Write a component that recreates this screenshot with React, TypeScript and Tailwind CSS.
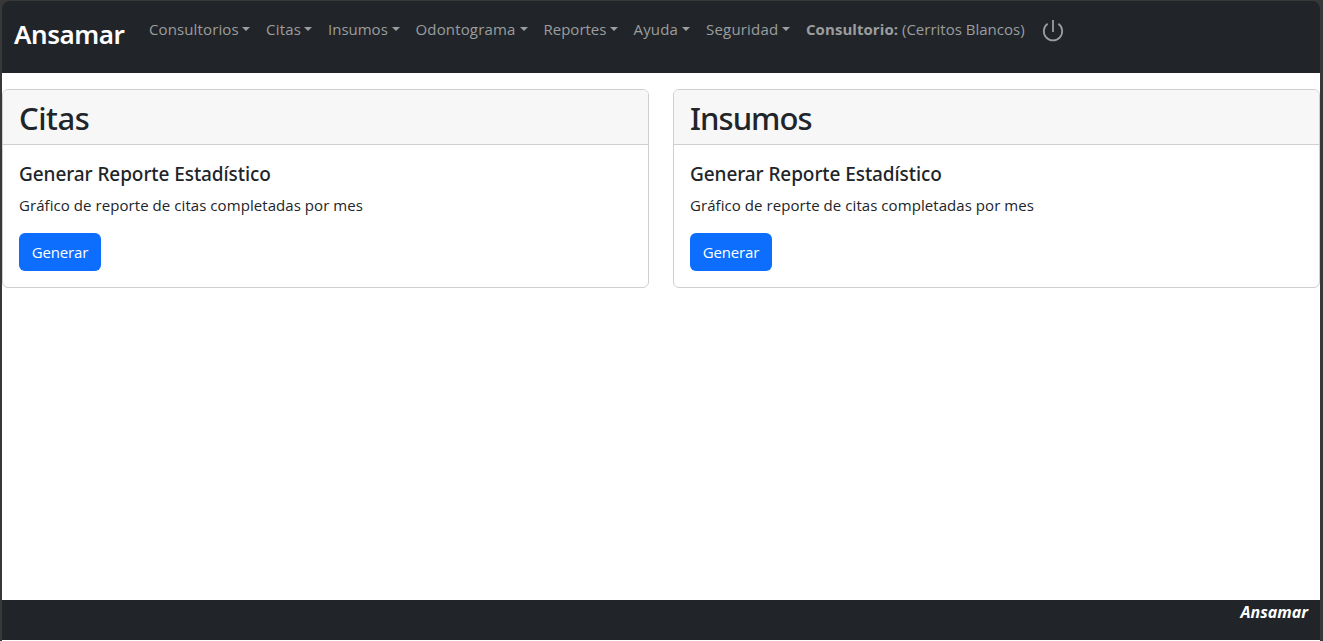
const menus = [
  { label: 'Consultorios', slot: 'w-[117px]', spacing: 'tracking-[0.12px]' },
  { label: 'Citas', slot: 'w-[62px]', spacing: 'tracking-[0.2px]' },
  { label: 'Insumos', slot: 'w-[87.5px]', spacing: 'tracking-[0px]' },
  { label: 'Odontograma', slot: 'w-[128px]', spacing: 'tracking-[0.15px]' },
  { label: 'Reportes', slot: 'w-[90px]', spacing: 'tracking-[0px]' },
  { label: 'Ayuda', slot: 'w-[72.5px]', spacing: 'tracking-[0.15px]' },
  { label: 'Seguridad', slot: 'w-[100px]', spacing: 'tracking-[0.2px]' },
];

const cards = [
  { title: 'Citas', spacing: 'tracking-[-0.5px]' },
  { title: 'Insumos', spacing: 'tracking-[-0.95px]' },
];

function Menu({ label, slot, spacing }: { label: string; slot: string; spacing: string }) {
  return (
    <a className={`flex shrink-0 items-center justify-between pr-4 ${slot}`}>
      <span className={spacing}>{label}</span>
      <span className="h-0 w-0 border-x-[4.8px] border-t-[4.8px] border-x-transparent border-t-[#9b9d9e]" />
    </a>
  );
}

function ReportCard({ title, spacing }: { title: string; spacing: string }) {
  return (
    <section className="h-[199px] overflow-hidden rounded-md border border-[#cfcfcf] bg-white">
      <header className="h-[55px] border-b border-[#cfcfcf] bg-[#f7f7f7] px-4 pt-[9px]">
        <h1 className={`font-['Noto_Sans',sans-serif] text-[31px] leading-[38px] font-medium ${spacing}`}>{title}</h1>
      </header>
      <div className="px-4 pt-[17px]">
        <h5 className="font-['Noto_Sans',sans-serif] text-[19px] leading-6 font-medium tracking-[-0.08px]">
          Generar Reporte Estadístico
        </h5>
        <p className="mt-[7px] text-[15px] leading-6 tracking-[0.065px]">Gráfico de reporte de citas completadas por mes</p>
        <button className="mt-4 h-[38px] w-[82px] rounded-md bg-[#0d6efd] text-[15px] leading-6 tracking-[-0.15px] text-white">
          Generar
        </button>
      </div>
    </section>
  );
}

export default function App() {
  return (
    <div className="h-[641px] w-[1323px] overflow-hidden bg-[#383838] pt-px pr-[3px] pl-[2px] font-['Open_Sans','Noto_Sans',sans-serif] text-[#212529]">
      <div className="flex h-full flex-col">
        <nav className="flex h-[72px] shrink-0 items-start rounded-t-lg bg-[#212529] pl-3 text-[15px] leading-6 whitespace-nowrap text-[#9b9d9e]">
          <div className="mt-[14px] w-[135px] shrink-0 font-['Noto_Sans',sans-serif] text-[26px] leading-[38px] font-semibold tracking-[-0.45px] text-white">
            Ansamar
          </div>
          <div className="mt-4 flex">
            {menus.map((m) => (
              <Menu key={m.label} {...m} />
            ))}
            <span className="w-[96px] font-bold tracking-[0.06px]">Consultorio:</span>
            <span className="w-[140px]">(Cerritos Blancos)</span>
          </div>
          <svg className="mt-[18px] h-6 w-[22px]" viewBox="0 0 22 24" fill="none" stroke="#9b9d9e" strokeWidth="1.8">
            <path d="M11 1v12M5.6 4.8A9.2 9.2 0 1 0 16.4 4.8" />
          </svg>
        </nav>
        <main className="grid flex-1 grid-cols-2 items-start gap-6 bg-white pt-4">
          {cards.map((c) => (
            <ReportCard key={c.title} {...c} />
          ))}
        </main>
        <footer className="h-10 shrink-0 bg-[#212529] pr-3 text-right text-[16px] leading-6 font-bold text-white italic">
          Ansamar
        </footer>
        <div className="h-px shrink-0 bg-white" />
      </div>
    </div>
  );
}
